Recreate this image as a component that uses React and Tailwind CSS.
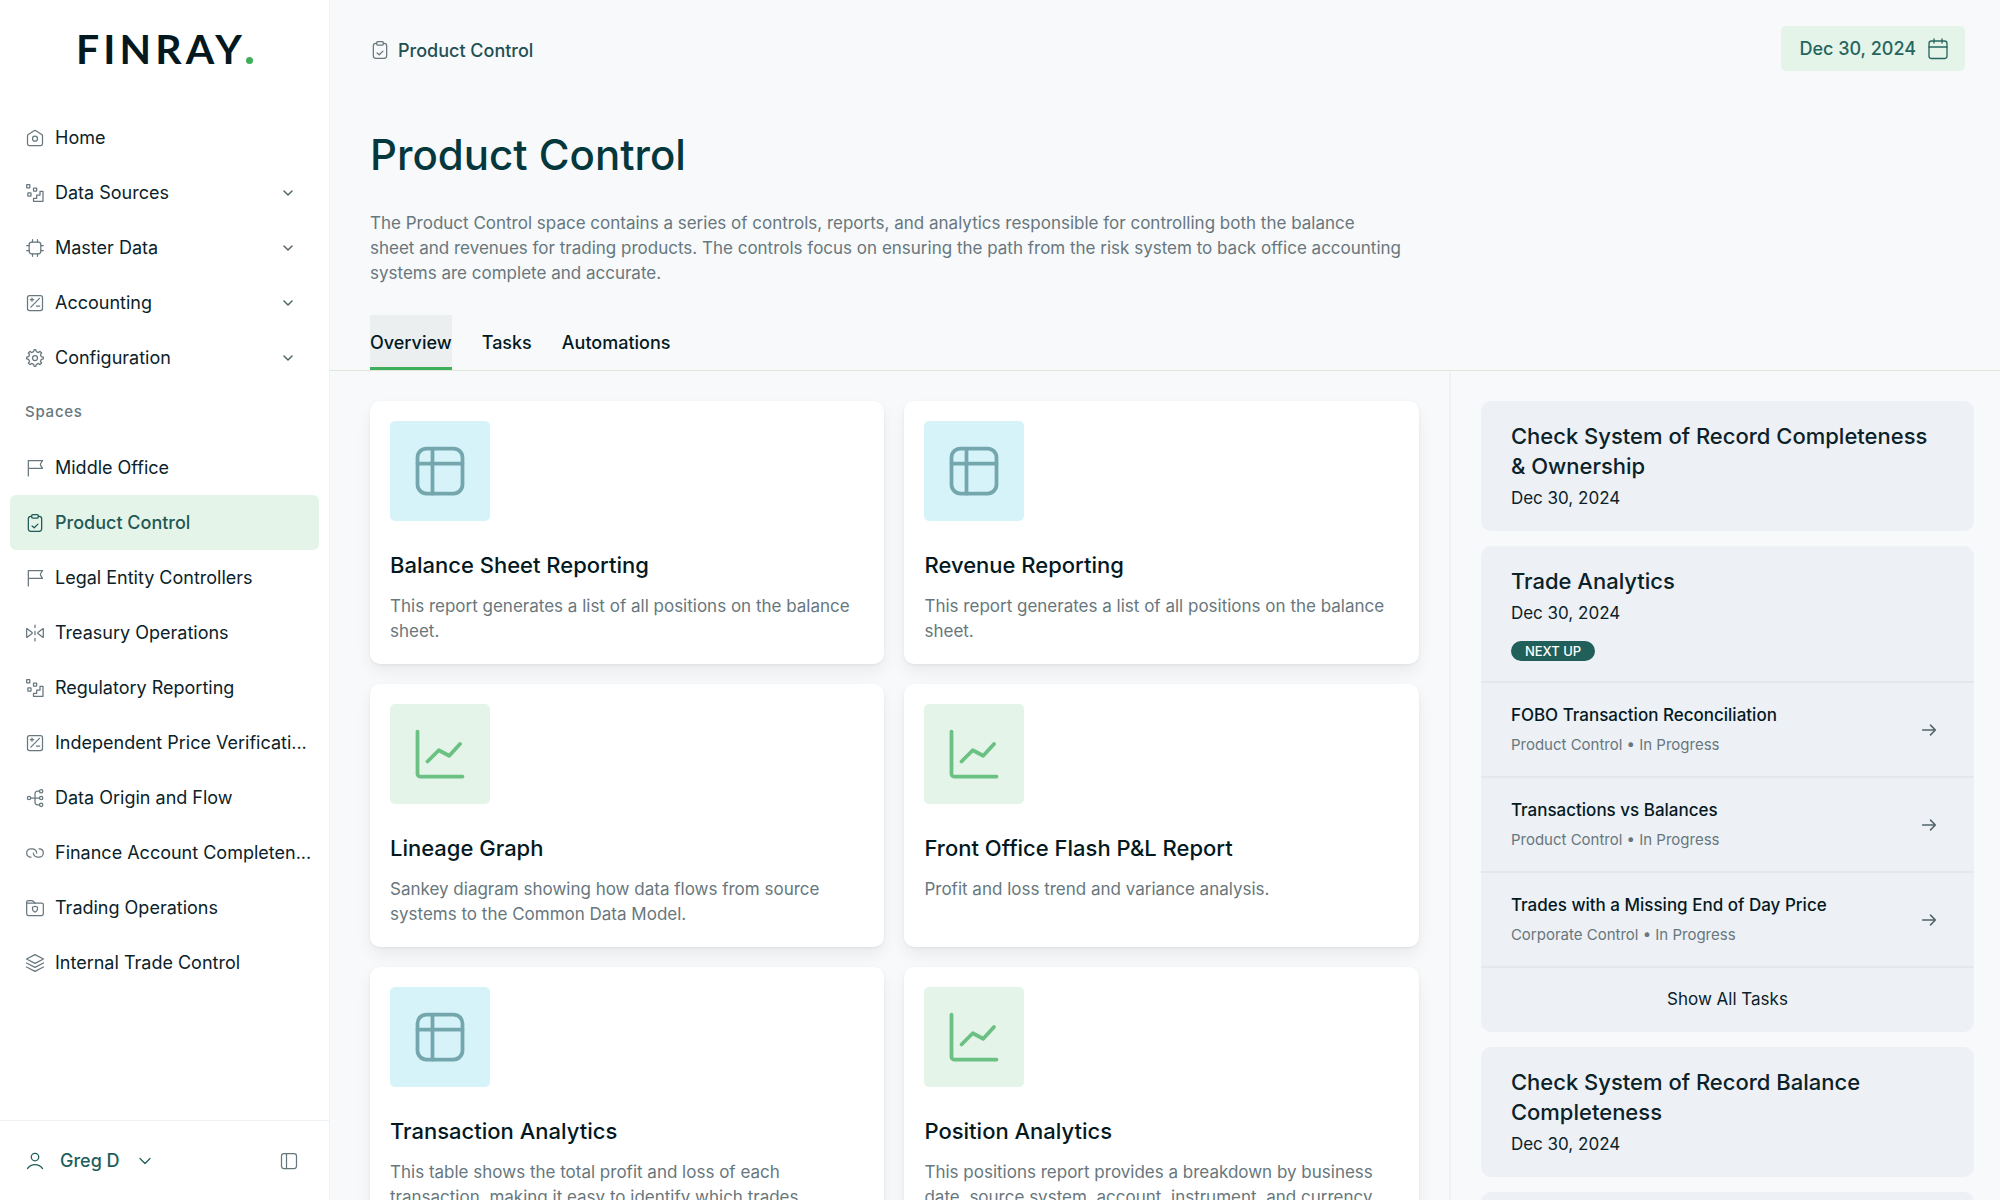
import React from 'react'

const ICONS = {
  home: (
    <>
      <path d="M3 9.6c0-.7.35-1.3.93-1.7l7-4.6a2 2 0 0 1 2.14 0l7 4.6c.58.4.93 1 .93 1.7V19a2 2 0 0 1-2 2H5a2 2 0 0 1-2-2V9.6Z" />
      <circle cx="12" cy="12.8" r="3" />
    </>
  ),
  sources: (
    <>
      <rect x="2" y="2" width="3.8" height="3.8" rx=".4" />
      <rect x="10.2" y="6" width="3.8" height="3.8" rx=".4" />
      <rect x="3.4" y="11.8" width="3.8" height="3.8" rx=".4" />
      <path d="M10.2 22v-3.6h3.8v-4h4V10h3.6v12H10.2Z" />
    </>
  ),
  chip: (
    <>
      <rect x="5" y="5" width="14" height="14" rx="3" />
      <path d="M9 2v3M15 2v3M9 19v3M15 19v3M2 9h3M2 15h3M19 9h3M19 15h3" />
    </>
  ),
  percent: (
    <>
      <rect x="3" y="3" width="18" height="18" rx="2.5" />
      <path d="M7 17 17.4 6.4M8.4 6v4M6.4 8h4M13.6 15.6h4" />
    </>
  ),
  gear: (
    <>
      <circle cx="12" cy="12" r="3" />
      <path d="M19.62 10.4 18.52 7.74 20 6l-2-2-1.74 1.48-2.7-1.11L12.94 2h-1.96l-.63 2.4-2.65 1.12L6 4 4 6l1.45 1.79-1.08 2.66L2 11v2l2.4.66 1.12 2.64L4 18l2 2 1.79-1.46 2.6 1.07L11 22h2l.6-2.39 2.66-1.1C16.7 18.83 18 20 18 20l2-2-1.48-1.75 1.1-2.65 2.38-.62V11l-2.38-.6Z" />
    </>
  ),
  flag: <path d="M4 21.5V3h17.2l-2.4 3.6a2 2 0 0 0 0 2.2l2.2 3.7H4" />,
  clipboard: (
    <>
      <rect x="8" y="2" width="8" height="4" rx="1.2" />
      <path d="M8 4H7a3 3 0 0 0-3 3v12a3 3 0 0 0 3 3h10a3 3 0 0 0 3-3V7a3 3 0 0 0-3-3h-1" />
      <path d="m8.5 15.5 2.6 2.2 4.4-4.4" />
    </>
  ),
  mirror: (
    <>
      <path d="M2 7.2v9.6c0 .4.3.5.6.3l5.9-4.6a.6.6 0 0 0 0-1L2.6 6.9c-.3-.2-.6-.1-.6.3Z" />
      <path d="M22 7.2v9.6c0 .4-.3.5-.6.3l-5.9-4.6a.6.6 0 0 1 0-1l5.9-4.6c.3-.2.6-.1.6.3Z" />
      <path d="M12 2.5v3M12 10v4M12 18.5v3" />
    </>
  ),
  flow: (
    <>
      <circle cx="4.8" cy="12" r="2" />
      <circle cx="19.4" cy="12" r="2" />
      <circle cx="19.4" cy="3.8" r="2" />
      <circle cx="19.4" cy="20.2" r="2" />
      <path d="M17.4 3.8H15a3 3 0 0 0-3 3v10.4a3 3 0 0 0 3 3h2.4M6.8 12h10.6" />
    </>
  ),
  link: (
    <>
      <path d="M14 12c0-2.5-2.32-5-5.14-5H7.14C4.3 7 2 9.24 2 12c0 2.38 1.71 4.37 4 4.87.37.08.75.13 1.14.13" />
      <path d="M10 12c0 2.5 2.32 5 5.14 5h1.72C19.7 17 22 14.76 22 12c0-2.38-1.71-4.37-4-4.88A5.3 5.3 0 0 0 16.86 7" />
    </>
  ),
  folder: (
    <>
      <path d="M2 10V5a2 2 0 0 1 2-2h4.2c.5 0 1 .2 1.3.6L12 6h8a2 2 0 0 1 2 2v11a2 2 0 0 1-2 2H4a2 2 0 0 1-2-2V6" />
      <path d="M2 6h10" />
      <path d="M9 10.8c1.2 0 2.2-.2 3-.8.8.6 1.8.8 3 .8v2.7c0 1.7-1.2 2.8-3 3.5-1.8-.7-3-1.8-3-3.5v-2.7Z" />
    </>
  ),
  layers: (
    <>
      <path d="m12 2 10.2 5.2L12 12.4 1.8 7.2 12 2Z" />
      <path d="M1.8 12 12 17.2 22.2 12M1.8 16.8 12 22l10.2-5.2" />
    </>
  ),
  user: (
    <>
      <circle cx="12" cy="7.2" r="4.5" />
      <path d="M3 21c2.2-2.9 5.3-4.6 9-4.6s6.8 1.7 9 4.6" />
    </>
  ),
  panel: (
    <>
      <rect x="3" y="3" width="18" height="18" rx="3" />
      <path d="M9 3v18" />
    </>
  ),
  calendar: (
    <>
      <rect x="3" y="4" width="18" height="17.5" rx="2.5" />
      <path d="M3 10h18M8 2v4M16 2v4" />
    </>
  ),
  chevron: <path d="m6 9 6 6 6-6" />,
  arrow: <path d="M3.5 12h17M14 5.5l6.5 6.5-6.5 6.5" />,
  table: (
    <>
      <rect x="3" y="3" width="18" height="18" rx="3.6" />
      <path d="M3 9h18M9 3v18" />
    </>
  ),
  chart: (
    <>
      <path d="M3 3v17a1 1 0 0 0 1 1h17" />
      <path d="m7 15 4.5-4.5 4.2 2.2L20 8" />
    </>
  ),
}

function Icon({ name, className = 'size-5', strokeWidth = 1.5 }) {
  return (
    <svg
      viewBox="0 0 24 24"
      fill="none"
      stroke="currentColor"
      strokeWidth={strokeWidth}
      strokeLinecap="round"
      strokeLinejoin="round"
      className={`shrink-0 ${className}`}
      aria-hidden="true"
    >
      {ICONS[name]}
    </svg>
  )
}

const mainNav = [
  { label: 'Home', icon: 'home' },
  { label: 'Data Sources', icon: 'sources', expandable: true },
  { label: 'Master Data', icon: 'chip', expandable: true },
  { label: 'Accounting', icon: 'percent', expandable: true },
  { label: 'Configuration', icon: 'gear', expandable: true },
]

const spaces = [
  { label: 'Middle Office', icon: 'flag' },
  { label: 'Product Control', icon: 'clipboard', active: true },
  { label: 'Legal Entity Controllers', icon: 'flag' },
  { label: 'Treasury Operations', icon: 'mirror' },
  { label: 'Regulatory Reporting', icon: 'sources' },
  { label: 'Independent Price Verificati...', icon: 'percent' },
  { label: 'Data Origin and Flow', icon: 'flow' },
  { label: 'Finance Account Completen...', icon: 'link' },
  { label: 'Trading Operations', icon: 'folder' },
  { label: 'Internal Trade Control', icon: 'layers' },
]

const reports = [
  {
    title: 'Balance Sheet Reporting',
    text: 'This report generates a list of all positions on the balance sheet.',
    kind: 'table',
  },
  {
    title: 'Revenue Reporting',
    text: 'This report generates a list of all positions on the balance sheet.',
    kind: 'table',
  },
  {
    title: 'Lineage Graph',
    text: 'Sankey diagram showing how data flows from source systems to the Common Data Model.',
    kind: 'chart',
  },
  {
    title: 'Front Office Flash P&L Report',
    text: 'Profit and loss trend and variance analysis.',
    kind: 'chart',
  },
  {
    title: 'Transaction Analytics',
    text: 'This table shows the total profit and loss of each transaction, making it easy to identify which trades',
    kind: 'table',
  },
  {
    title: 'Position Analytics',
    text: 'This positions report provides a breakdown by business date, source system, account, instrument, and currency',
    kind: 'chart',
  },
]

const tasks = [
  { title: 'FOBO Transaction Reconciliation', space: 'Product Control' },
  { title: 'Transactions vs Balances', space: 'Product Control' },
  { title: 'Trades with a Missing End of Day Price', space: 'Corporate Control' },
]

function NavItem({ label, icon, expandable, active }) {
  const state = active ? 'bg-[#e4f4e8] text-[#1f5a57] font-medium' : 'text-[#0b2229]'
  const base = 'flex h-[55px] w-full items-center gap-2.5 rounded-md pl-[15px] text-left'
  const content = (
    <>
      <Icon name={icon} className={active ? 'size-5' : 'size-5 text-[#67777d]'} />
      <span className="min-w-0 flex-1 whitespace-nowrap">{label}</span>
      {expandable && <Icon name="chevron" className="size-4 text-[#52646a]" strokeWidth={2.2} />}
    </>
  )

  return (
    <li>
      {expandable ? (
        <button type="button" className={`${base} pr-[23px] ${state}`}>{content}</button>
      ) : (
        <a href="#" className={`${base} pr-1 ${state}`}>{content}</a>
      )}
    </li>
  )
}

function Sidebar() {
  return (
    <aside className="flex w-[330px] shrink-0 flex-col border-r border-[#eff1f2] bg-white">
      <div className="flex h-[110px] items-start justify-center pt-6">
        <div className="flex items-baseline font-['Lato',sans-serif] text-[41px] leading-[50px] font-bold text-[#04191f]">
          <span className="tracking-widest">FINRAY</span>
          <span className="size-[7px] rounded-full bg-[#3fae5a]" />
        </div>
      </div>
      <nav className="min-h-0 flex-1 overflow-hidden px-2.5">
        <ul>
          {mainNav.map((item) => (
            <NavItem key={item.label} {...item} />
          ))}
        </ul>
        <h2 className="flex h-[55px] items-center px-[15px] text-[15px] font-medium tracking-wider text-[#67777d]">
          Spaces
        </h2>
        <ul>
          {spaces.map((item) => (
            <NavItem key={item.label} {...item} />
          ))}
        </ul>
      </nav>
      <div className="flex h-20 items-center justify-between border-t border-[#eff1f2] pr-[30px] pl-[25px]">
        <button type="button" className="flex items-center gap-[15px] font-medium text-[#1f5f5b]">
          <Icon name="user" />
          Greg D
          <Icon name="chevron" />
        </button>
        <button type="button" aria-label="Collapse sidebar" className="text-[#67777d]">
          <Icon name="panel" />
        </button>
      </div>
    </aside>
  )
}

function ReportCard({ title, text, kind }) {
  const tile = kind === 'table' ? 'bg-[#d7f3fa] text-[#74a7ad]' : 'bg-[#e4f4e8] text-[#6bc083]'
  return (
    <a href="#" className="block rounded-[10px] bg-white p-5 shadow-[0_8px_16px_rgba(0,0,0,0.06),0_1px_3px_rgba(0,0,0,0.06)]">
      <div className={`flex size-[100px] items-center justify-center rounded-[5px] ${tile}`}>
        <Icon name={kind} className="size-[60px]" />
      </div>
      <h3 className="mt-7 text-[22px] leading-8 font-medium text-[#04191f]">{title}</h3>
      <p className="mt-[13px] text-[17px] leading-[25px] text-[#67777d]">{text}</p>
    </a>
  )
}

function SideCard({ title, badge, children }) {
  return (
    <section className="overflow-hidden rounded-[10px] bg-[#edf0f5] text-[17px]">
      <div className="px-[30px] py-5">
        <h3 className="text-[22px] leading-[30px] font-medium text-[#0b2229]">{title}</h3>
        <p className="mt-[5px] leading-[25px]">Dec 30, 2024</p>
        {badge && (
          <span className="mt-[15px] flex h-5 w-fit items-center rounded-full bg-[#215f5a] px-3.5 text-[13px] leading-5 font-medium text-white">
            {badge}
          </span>
        )}
      </div>
      {children}
    </section>
  )
}

export default function App() {
  return (
    <div className="flex h-screen overflow-hidden bg-[#f7f9fb] font-['Inter',sans-serif] text-[18px] text-[#0b2229]">
      <Sidebar />
      <main className="flex min-w-0 flex-1 flex-col">
        <header className="border-b border-[#dfe7d8] pl-10">
          <div className="flex items-center justify-between pt-[26px] pr-[35px]">
            <a href="#" className="flex items-center gap-2 pt-[3px] font-medium text-[#1f5052]">
              <Icon name="clipboard" className="size-5 text-[#67777d]" />
              Product Control
            </a>
            <button
              type="button"
              className="flex h-[45px] items-center gap-2.5 rounded-[5px] bg-[#e4f4e8] pr-[15px] pl-[18px] font-medium text-[#26655f]"
            >
              Dec 30, 2024
              <Icon name="calendar" className="size-6" strokeWidth={1.3} />
            </button>
          </div>
          <h1 className="mt-[59px] text-[42px] leading-[50px] font-medium text-[#04383c]">Product Control</h1>
          <p className="mt-[31px] max-w-[1070px] text-[17px] leading-[25px] text-[#67777d]">
            The Product Control space contains a series of controls, reports, and analytics responsible for controlling
            both the balance
            <br />
            sheet and revenues for trading products. The controls focus on ensuring the path from the risk system to
            back office accounting
            <br />
            systems are complete and accurate.
          </p>
          <nav className="mt-[29px] flex gap-[30px] font-medium text-[#04191f]">
            <button type="button" className="h-[55px] border-b-[3px] border-[#3fae5a] bg-[#ebeff0] pt-[3px]">
              Overview
            </button>
            <button type="button" className="h-[55px] border-b-[3px] border-transparent pt-[3px]">Tasks</button>
            <button type="button" className="h-[55px] border-b-[3px] border-transparent pt-[3px]">Automations</button>
          </nav>
        </header>

        <div className="flex min-h-0 flex-1 overflow-hidden">
          <div className="min-w-0 flex-1 overflow-hidden pt-[30px] pr-[30px] pl-10">
            <div className="grid grid-cols-2 gap-5">
              {reports.map((report) => (
                <ReportCard key={report.title} {...report} />
              ))}
            </div>
          </div>

          <aside className="flex w-[33%] shrink-0 flex-col gap-[15px] overflow-hidden border-l-2 border-[#eff1f3] pt-[30px] pr-[26px] pl-[30px] *:shrink-0">
            <SideCard title="Check System of Record Completeness & Ownership" />
            <SideCard title="Trade Analytics" badge="NEXT UP">
              <ul>
                {tasks.map((task) => (
                  <li key={task.title} className="border-t-2 border-[#e4e8ec]">
                    <a href="#" className="flex h-[93px] items-center justify-between pr-9 pl-[30px]">
                      <span>
                        <span className="block leading-[30px] font-medium text-[#04191f]">{task.title}</span>
                        <span className="block text-[15px] leading-[30px] text-[#67777d]">
                          {task.space} • In Progress
                        </span>
                      </span>
                      <Icon name="arrow" className="size-[18px] text-[#52646a]" strokeWidth={2} />
                    </a>
                  </li>
                ))}
              </ul>
              <button type="button" className="h-[66px] w-full border-t-2 border-[#e4e8ec]">Show All Tasks</button>
            </SideCard>
            <SideCard title="Check System of Record Balance Completeness" />
            <div className="h-5 rounded-t-[10px] bg-[#edf0f5]" />
          </aside>
        </div>
      </main>
    </div>
  )
}
